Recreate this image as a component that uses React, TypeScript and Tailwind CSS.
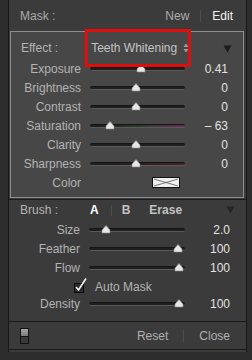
import React from 'react';

function Slider({ pos, width, tint }: { pos: number; width: number; tint?: string }) {
  return (
    <div className="relative h-[19px] flex items-center" style={{ width }}>
      <div className={`w-full h-[4px] rounded-full border-t border-[#151515] border-b border-b-[#5a5a5a] ${tint ?? 'bg-[#1f1f1f]'}`} />
      <svg
        className="absolute top-[5px]"
        style={{ left: pos - 5 }}
        width="10"
        height="9"
        viewBox="0 0 10 9"
      >
        <path d="M5 0.5 L9 5 L9 8 L1 8 L1 5 Z" fill="#e6e6e6" stroke="#8a8a8a" strokeWidth="0.6" />
      </svg>
    </div>
  );
}

function EffectRow({ label, value, pos, tint }: { label: string; value: string; pos: number; tint?: string }) {
  return (
    <div className="flex items-center h-[19px]">
      <div className="w-[70px] text-right text-[#b3b3b3]">{label}</div>
      <div className="ml-[9px]">
        <Slider pos={pos} width={95} tint={tint} />
      </div>
      <div className="w-[43px] text-right text-[#e2e2e2]">{value}</div>
    </div>
  );
}

function BrushRow({ label, value, pos }: { label: string; value: string; pos: number }) {
  return (
    <div className="flex items-center h-[19px]">
      <div className="w-[71px] text-right text-[#b3b3b3]">{label}</div>
      <div className="ml-[9px]">
        <Slider pos={pos} width={96} />
      </div>
      <div className="w-[45px] text-right text-[#e2e2e2]">{value}</div>
    </div>
  );
}

function Tri() {
  return (
    <svg width="9" height="8" viewBox="0 0 9 8">
      <path d="M0.5 0.5 L8.5 0.5 L4.5 7.5 Z" fill="#1c1c1c" />
    </svg>
  );
}

export default function App() {
  return (
    <div className="relative w-[252px] h-[360px] bg-[#2d2d2d] font-['Liberation_Sans',sans-serif] text-[12px] leading-none overflow-hidden">
      <div className="ml-[8px] w-[239px] h-[352px] bg-[#3b3b3b] border-l border-r border-[#171717] flex flex-col">
        {/* Mask header */}
        <div className="h-[31px] flex items-center pl-[11px] pr-[13px]">
          <span className="text-[#a9a9a9]">Mask :</span>
          <span className="ml-auto text-[#ababab]">New</span>
          <span className="mx-[11px] w-px h-[12px] bg-[#4c4c4c]" />
          <span className="text-[#f2f2f2]">Edit</span>
        </div>

        {/* Effect box */}
        <div className="ml-[1px] w-[234px] h-[167px] bg-[#474747] border border-[#8e8e8e] flex flex-col">
          <div className="h-[27px] pt-[5px] flex items-center">
            <span className="ml-[10px] text-[#b3b3b3]">Effect :</span>
            <span className="ml-[33px] text-[#c4c4c4]">Teeth Whitening</span>
            <svg className="ml-[6px]" width="6" height="10" viewBox="0 0 6 10">
              <path d="M3 0.5 L5.5 4 L0.5 4 Z M3 9.5 L5.5 6 L0.5 6 Z" fill="#9c9c9c" />
            </svg>
            <span className="ml-auto mr-[11px] mt-[2px]"><Tri /></span>
          </div>
          <EffectRow label="Exposure" value="0.41" pos={51} />
          <EffectRow label="Brightness" value="0" pos={46} />
          <EffectRow label="Contrast" value="0" pos={46} />
          <EffectRow
            label="Saturation"
            value="– 63"
            pos={20}
            tint="bg-gradient-to-r from-[#1c1c1c] via-[#2a3a2a] to-[#6a2a5a]"
          />
          <EffectRow label="Clarity" value="0" pos={46} />
          <EffectRow
            label="Sharpness"
            value="0"
            pos={46}
            tint="bg-gradient-to-r from-[#1f1f1f] via-[#2a1f1f] to-[#4a2222]"
          />
          <div className="flex items-center h-[19px]">
            <div className="w-[70px] text-right text-[#b3b3b3]">Color</div>
            <svg className="ml-[71px]" width="28" height="11" viewBox="0 0 28 11">
              <rect x="0.5" y="0.5" width="27" height="10" fill="#f0f0f0" stroke="#111" />
              <path d="M2 2 L26 9 M2 9 L26 2" stroke="#555" strokeWidth="0.8" />
            </svg>
          </div>
        </div>

        {/* divider */}
        <div className="mt-[1px] h-px bg-[#1a1a1a]" />

        {/* Brush section */}
        <div className="flex flex-col">
          <div className="h-[20px] flex items-center">
            <span className="ml-[11px] text-[#b3b3b3]">Brush :</span>
            <span className="ml-[32px] font-bold text-white">A</span>
            <span className="ml-[12px] w-px h-[11px] bg-[#4e4e4e]" />
            <span className="ml-[10px] font-bold text-[#c2c2c2]">B</span>
            <span className="ml-[19px] font-bold text-[#c2c2c2]">Erase</span>
            <span className="ml-auto mr-[11px] opacity-70"><Tri /></span>
          </div>
          <BrushRow label="Size" value="2.0" pos={17} />
          <BrushRow label="Feather" value="100" pos={89} />
          <BrushRow label="Flow" value="100" pos={90} />
          <div className="h-[17px] flex items-center">
            <svg className="ml-[65px]" width="14" height="17" viewBox="0 0 14 17">
              <rect x="0.5" y="6.5" width="9" height="9" fill="#2a2a2a" stroke="#0c0c0c" />
              <path d="M2 10 L4.5 13 L12 1.5" stroke="#f4f4f4" strokeWidth="1.6" fill="none" />
            </svg>
            <span className="ml-[7px] mt-[3px] text-[#b3b3b3]">Auto Mask</span>
          </div>
          <BrushRow label="Density" value="100" pos={90} />
        </div>

        {/* Bottom bar */}
        <div className="mt-auto h-[29px] border-t border-[#1a1a1a] border-b border-b-[#1a1a1a] flex items-center pr-[16px]">
          <div className="ml-[11px] w-[9px] h-[16px] border border-[#111] flex flex-col">
            <div className="h-1/2 bg-gradient-to-b from-[#a8a8a8] to-[#7a7a7a]" />
            <div className="h-1/2 bg-[#3a3a3a] border-t border-[#111]" />
          </div>
          <span className="ml-auto text-[#b0b0b0]">Reset</span>
          <span className="mx-[15px] w-px h-[14px] bg-[#4a4a4a]" />
          <span className="text-[#b0b0b0]">Close</span>
        </div>
        <div className="h-[2px]" />
      </div>

      {/* red highlight annotation */}
      <div className="absolute left-[85px] top-[29px] w-[106px] h-[38px] border-[3px] border-[#e00d0d]" />
    </div>
  );
}
